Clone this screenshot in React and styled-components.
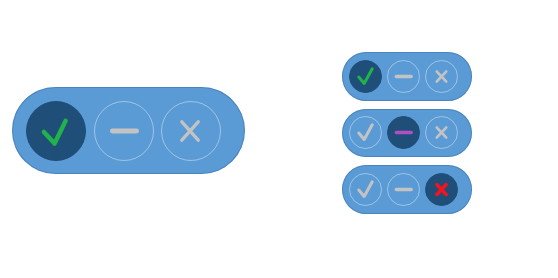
import React from 'react'
import styled, { createGlobalStyle } from 'styled-components'

const PILL = '#5b9bd5'
const DARK = '#1f4e79'
const GREY = '#c3c3c3'

const GlobalStyle = createGlobalStyle`
  html, body {
    margin: 0;
    padding: 0;
    background: #ffffff;
    font-family: 'Liberation Sans', Arial, sans-serif;
  }
`

const SIZES = {
  big: { height: 87, circle: 60, gap: 7.5, padLeft: 14, padRight: 24 },
  small: { height: 48.5, circle: 33, gap: 5, padLeft: 7, padRight: 14 },
}

// icon paths in a 60x60 box, tuned per pill size
const ICONS = {
  big: {
    check: { d: 'M17.5 31 L28.5 43 L40 19.5', w: 4.6 },
    dash: { d: 'M18 30 H43', w: 5 },
    cross: { d: 'M20.5 20.5 L37.5 39.5 M37.5 20.5 L20.5 39.5', w: 3.4, bold: 5 },
  },
  small: {
    check: { d: 'M17 31 L27.5 43.5 L43 15', w: 5.8 },
    dash: { d: 'M16 30 H45', w: 6.4 },
    cross: { d: 'M21 20.5 L39 39.5 M39 20.5 L21 39.5', w: 5.4, bold: 7 },
  },
}

const Page = styled.div`
  width: 558px;
  height: 278px;
  display: flex;
  flex-direction: row;
  align-items: flex-start;
  box-sizing: border-box;
  padding: 52px 0 0 12px;
`

const BigSlot = styled.div`
  padding-top: 35px;
  margin-right: 97px;
`

const Column = styled.div`
  display: flex;
  flex-direction: column;
  gap: 8px;
`

const Pill = styled.div`
  display: flex;
  flex-direction: row;
  align-items: center;
  box-sizing: border-box;
  height: ${(p) => SIZES[p.$size].height}px;
  border-radius: ${(p) => SIZES[p.$size].height / 2}px;
  padding: 0 ${(p) => SIZES[p.$size].padRight}px 0 ${(p) => SIZES[p.$size].padLeft}px;
  gap: ${(p) => SIZES[p.$size].gap}px;
  background: ${PILL};
  box-shadow: inset 0 0 0 1px rgba(40, 90, 150, 0.35);
`

const Circle = styled.div`
  width: ${(p) => SIZES[p.$size].circle}px;
  height: ${(p) => SIZES[p.$size].circle}px;
  box-sizing: border-box;
  border-radius: 50%;
  display: flex;
  align-items: center;
  justify-content: center;
  background: ${(p) => (p.$active ? DARK : 'transparent')};
  border: 1px solid ${(p) => (p.$active ? DARK : 'rgba(255, 255, 255, 0.4)')};

  svg {
    width: 100%;
    height: 100%;
    display: block;
  }
`

const Icon = ({ spec, color, width }) => (
  <svg viewBox="0 0 60 60">
    <path d={spec.d} fill="none" stroke={color} strokeWidth={width || spec.w} strokeLinecap="round" strokeLinejoin="round" />
  </svg>
)

const Toggle = ({ size, value }) => {
  const icons = ICONS[size]
  return (
    <Pill $size={size}>
      <Circle $size={size} $active={value === 'yes'}>
        <Icon spec={icons.check} color={value === 'yes' ? '#22b24c' : GREY} />
      </Circle>
      <Circle $size={size} $active={value === 'neutral'}>
        <Icon spec={icons.dash} color={value === 'neutral' ? '#b04fbf' : GREY} />
      </Circle>
      <Circle $size={size} $active={value === 'no'}>
        <Icon
          spec={icons.cross}
          color={value === 'no' ? '#f2141e' : GREY}
          width={value === 'no' ? icons.cross.bold : undefined}
        />
      </Circle>
    </Pill>
  )
}

export default function App() {
  return (
    <>
      <GlobalStyle />
      <Page>
        <BigSlot>
          <Toggle size="big" value="yes" />
        </BigSlot>
        <Column>
          <Toggle size="small" value="yes" />
          <Toggle size="small" value="neutral" />
          <Toggle size="small" value="no" />
        </Column>
      </Page>
    </>
  )
}
